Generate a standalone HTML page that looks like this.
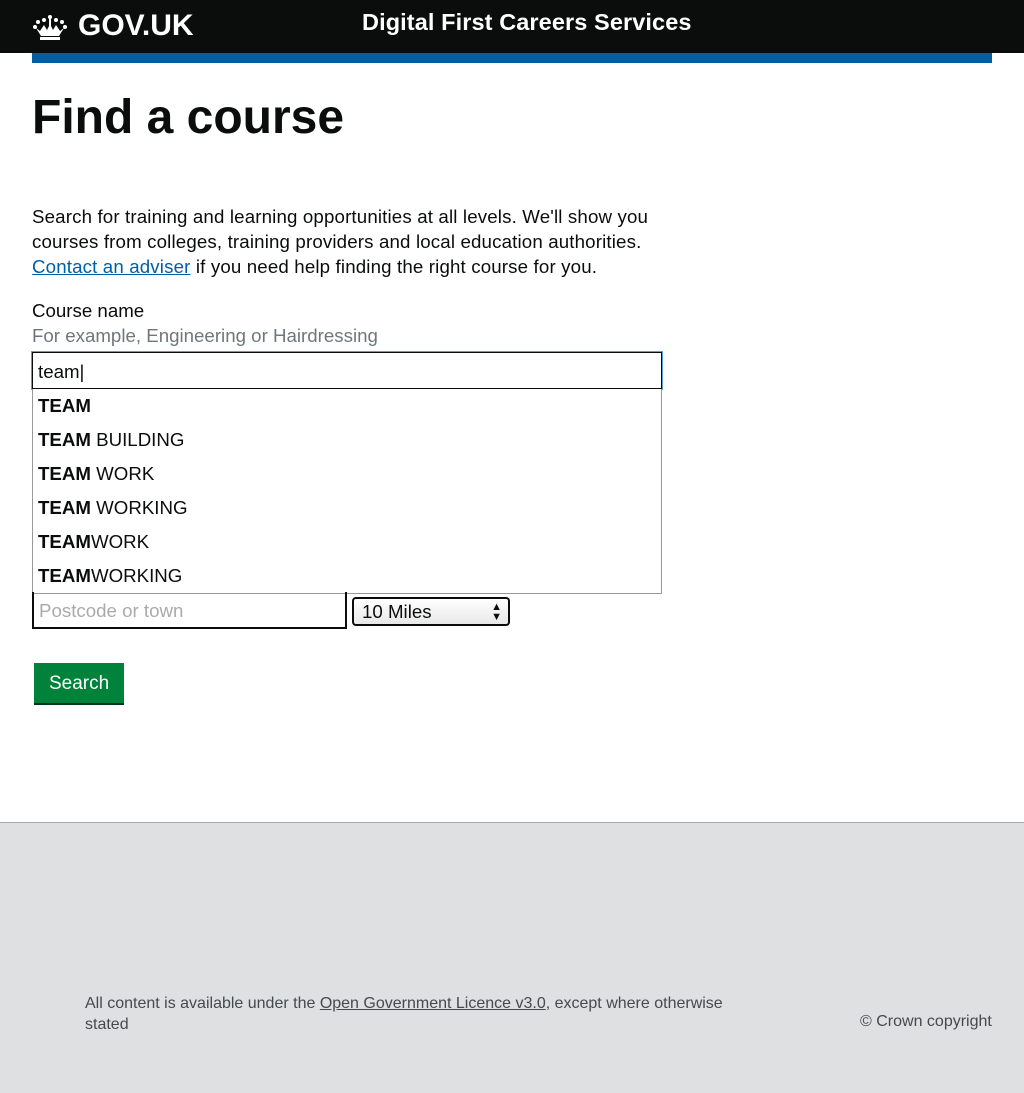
<!DOCTYPE html>
<html><head><meta charset="utf-8"><style>
*{margin:0;padding:0;box-sizing:border-box}
body{width:1024px;height:1093px;font-family:"Liberation Sans",Arial,sans-serif;color:#0b0c0c;background:#fff;position:relative;overflow:hidden}
.a{position:absolute}
.hdr{left:0;top:0;width:1024px;height:53px;background:#0b0c0c}
.bar{left:32px;top:53px;width:960px;height:10px;background:#005ea5}
.logo{left:78px;top:9px;color:#fff;font-weight:bold;font-size:30px}
.svc{left:362px;top:9px;color:#fff;font-weight:bold;font-size:23.5px;letter-spacing:.1px}
h1{position:absolute;left:32px;top:90px;font-size:48px;font-weight:bold}
.p{left:32px;top:204px;font-size:18.7px;letter-spacing:.15px;line-height:25px;width:660px}
a{color:#005ea5}
.lab{left:32px;top:300px;font-size:18.7px}
.hint{left:32px;top:325px;font-size:18.7px;color:#6f777b}
.inp{left:32px;top:352px;width:630px;height:37px;border:1px solid #0b0c0c;box-shadow:0 0 0 1px #5b9dd9;font-size:18.7px;padding:8px 5px}
.list{left:32px;top:389px;width:630px;height:205px;border:1px solid #999;border-top:none;background:#fff}
.list div{height:34px;font-size:18.7px;padding:6px 5px;line-height:22px}
.pc{left:32px;top:592px;width:315px;height:37px;border:2px solid #0b0c0c;border-top:none;font-size:18.7px;color:#aaa;padding:8px 5px}
.sel{left:352px;top:597px;width:158px;height:29px;border:2px solid #0b0c0c;border-radius:4px;background:linear-gradient(#fff,#e8e8e8);font-size:18.7px;padding:2px 8px}
.btn{left:34px;top:663px;width:90px;height:40px;background:#00823b;box-shadow:0 2px 0 #003618;color:#fff;font-size:19px;padding:10px 15px}
.ft{left:0;top:822px;width:1024px;height:271px;background:#dee0e2;border-top:1px solid #a1acb2}
.ft1{left:85px;top:993px;font-size:16px;line-height:21px;color:#454a4c;width:660px}
.ft1 a{color:#454a4c}
.cc{left:860px;top:1013px;font-size:16px;color:#454a4c}
</style></head><body>
<div class="a hdr"></div>
<svg class="a" style="left:33px;top:14px" width="34" height="26" viewBox="0 0 34 26"><g fill="#fff"><circle cx="17" cy="3" r="2"/><rect x="16" y="2" width="2" height="10"/><circle cx="5" cy="8" r="2"/><circle cx="29" cy="8" r="2"/><circle cx="11" cy="6" r="2"/><circle cx="23" cy="6" r="2"/><circle cx="2" cy="13" r="2"/><circle cx="32" cy="13" r="2"/><path d="M3 14 L8 22 L26 22 L31 14 L27 17 L23 11 L20 16 L17 10 L14 16 L11 11 L7 17Z"/><rect x="7" y="23" width="20" height="3"/></g></svg>
<div class="a logo">GOV.UK</div>
<div class="a svc">Digital First Careers Services</div>
<div class="a bar"></div>
<h1>Find a course</h1>
<div class="a p">Search for training and learning opportunities at all levels. We'll show you courses from colleges, training providers and local education authorities. <a href="#">Contact an adviser</a> if you need help finding the right course for you.</div>
<div class="a lab">Course name</div>
<div class="a hint">For example, Engineering or Hairdressing</div>
<div class="a inp">team|</div>
<div class="a list">
<div><b>TEAM</b></div><div><b>TEAM</b> BUILDING</div><div><b>TEAM</b> WORK</div><div><b>TEAM</b> WORKING</div><div><b>TEAM</b>WORK</div><div><b>TEAM</b>WORKING</div>
</div>
<div class="a pc">Postcode or town</div>
<div class="a sel">10 Miles<span style="position:absolute;right:6px;top:3px;font-size:11px;line-height:10px">▲<br>▼</span></div>
<div class="a btn">Search</div>
<div class="a ft"></div>
<div class="a ft1">All content is available under the <a href="#">Open Government Licence v3.0</a>, except where otherwise stated</div>
<div class="a cc">© Crown copyright</div>
</body></html>
